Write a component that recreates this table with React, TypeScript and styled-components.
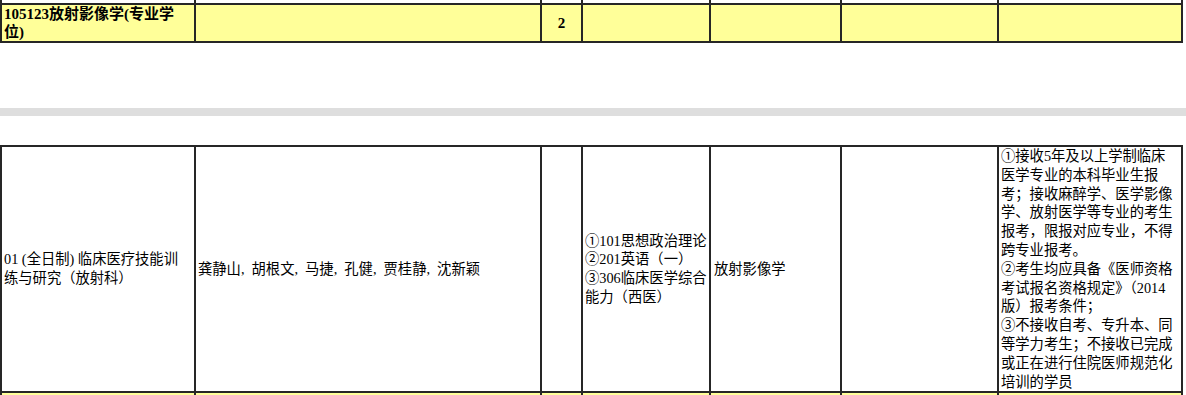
import React from "react";
import styled, { createGlobalStyle } from "styled-components";

const GlobalStyle = createGlobalStyle`
  html, body {
    margin: 0;
    padding: 0;
    background: #ffffff;
  }
  body {
    font-family: "Liberation Serif", "Noto Sans CJK SC", serif;
    color: #000000;
  }
`;

const COLS = [194, 346, 41, 128, 131, 157, 184];

const requirementLines = [
  "①接收5年及以上学制临床",
  "医学专业的本科毕业生报",
  "考；接收麻醉学、医学影像",
  "学、放射医学等专业的考生",
  "报考，限报对应专业，不得",
  "跨专业报考。",
  "②考生均应具备《医师资格",
  "考试报名资格规定》（2014",
  "版）报考条件；",
  "③不接收自考、专升本、同",
  "等学力考生；不接收已完成",
  "或正在进行住院医师规范化",
  "培训的学员",
];

const examLines = [
  "①101思想政治理论",
  "②201英语（一）",
  "③306临床医学综合",
  "能力（西医）",
];

const App = () => {
  return (
    <>
      <GlobalStyle />
      <Page>
        <Clip>
          <Sheet $offset={-27}>
            <ColGroup />
            <tbody>
              <Row $height={30}>
                <Cell />
                <Cell />
                <Cell />
                <Cell />
                <Cell />
                <Cell />
                <Cell $valign="bottom">跨专业报考。</Cell>
              </Row>
              <Row $height={38} $fill="#ffff99">
                <Cell $bold>105123放射影像学(专业学位)</Cell>
                <Cell />
                <Cell $bold $align="center">
                  2
                </Cell>
                <Cell />
                <Cell />
                <Cell />
                <Cell />
              </Row>
            </tbody>
          </Sheet>
        </Clip>

        <Divider />

        <Sheet $offset={29}>
          <ColGroup />
          <tbody>
            <Row>
              <Cell>01 (全日制) 临床医疗技能训练与研究（放射科）</Cell>
              <Cell $spread>龚静山, 胡根文, 马捷, 孔健, 贾桂静, 沈新颖</Cell>
              <Cell />
              <Cell $nowrap>
                {examLines.map((line) => (
                  <Line key={line}>{line}</Line>
                ))}
              </Cell>
              <Cell $pad={3}>放射影像学</Cell>
              <Cell />
              <Cell $nowrap>
                {requirementLines.map((line) => (
                  <Line key={line}>{line}</Line>
                ))}
              </Cell>
            </Row>
            <Row $height={30} $fill="#ffff99">
              <Cell />
              <Cell />
              <Cell />
              <Cell />
              <Cell />
              <Cell />
              <Cell />
            </Row>
          </tbody>
        </Sheet>
      </Page>
    </>
  );
};

const ColGroup = () => (
  <colgroup>
    {COLS.map((w, i) => (
      <col key={i} style={{ width: w }} />
    ))}
  </colgroup>
);

export default App;

const Page = styled.div`
  width: 1186px;
  height: 395px;
  overflow: hidden;
`;

const Clip = styled.div`
  overflow: hidden;
`;

const Sheet = styled.table<{ $offset: number }>`
  width: 1183px;
  border-collapse: collapse;
  table-layout: fixed;
  margin-top: ${({ $offset }) => $offset}px;
  font-size: 14.3px;
  line-height: 18.8px;
`;

const Row = styled.tr<{ $height?: number; $fill?: string }>`
  height: ${({ $height }) => ($height ? `${$height}px` : "auto")};
  background: ${({ $fill }) => $fill || "#ffffff"};
`;

const Cell = styled.td<{
  $bold?: boolean;
  $align?: string;
  $valign?: string;
  $nowrap?: boolean;
  $spread?: boolean;
  $pad?: number;
}>`
  border: 2px solid #262626;
  padding: 0 ${({ $pad }) => $pad ?? 2}px;
  text-align: ${({ $align }) => $align || "left"};
  vertical-align: ${({ $valign }) => $valign || "middle"};
  font-weight: ${({ $bold }) => ($bold ? 700 : 400)};
  line-height: ${({ $bold }) => ($bold ? "18px" : "18.8px")};
  font-size: ${({ $bold }) => ($bold ? "15px" : "14.3px")};
  white-space: ${({ $nowrap }) => ($nowrap ? "nowrap" : "normal")};
  word-spacing: ${({ $spread }) => ($spread ? "3.5px" : "0")};
  overflow: hidden;
`;

const Line = styled.div`
  display: block;
`;

const Divider = styled.div`
  height: 8px;
  margin-top: 65px;
  background: #dedede;
`;
